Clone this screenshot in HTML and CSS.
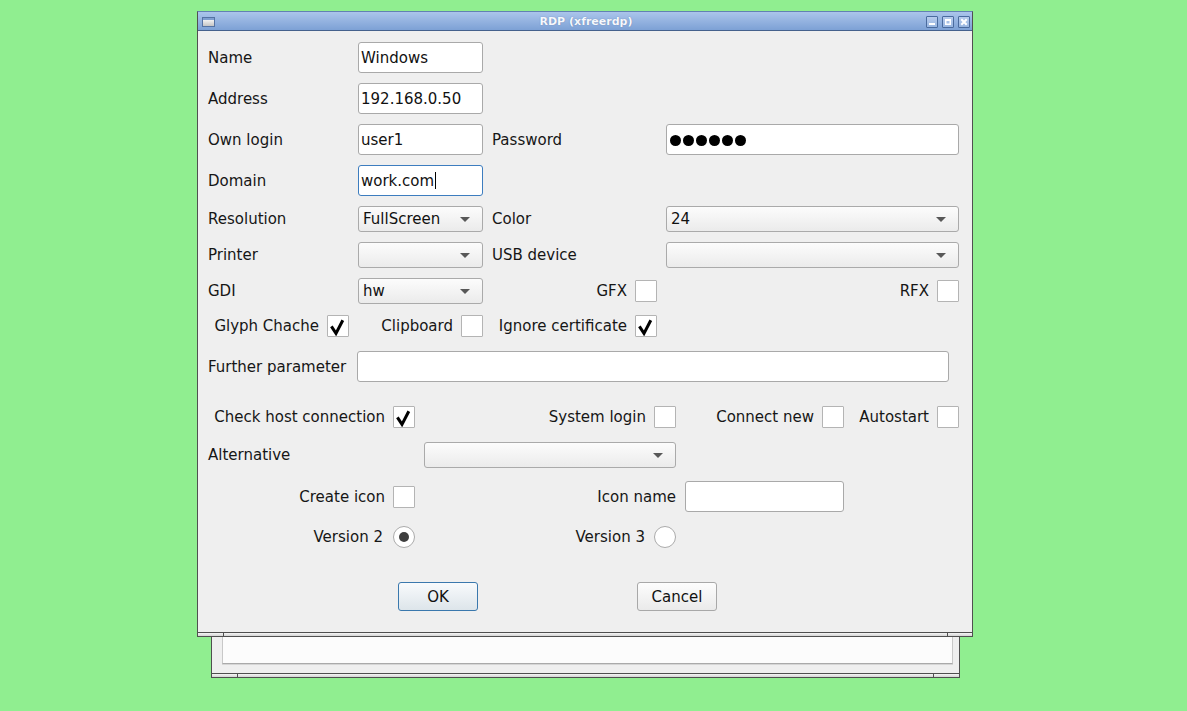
FILE: index.html
```html
<!DOCTYPE html>
<html>
<head>
<meta charset="utf-8">
<title>RDP (xfreerdp)</title>
<link rel="stylesheet" href="styles.css">
</head>
<body>
<div class="win back">
  <div class="back-body"><div class="back-field"></div></div>
  <div class="strip"><span class="seg seg-l"></span><span class="seg seg-m"></span><span class="seg seg-r back-r"></span></div>
</div>

<div class="win front">
  <div class="titlebar">
    <div class="ticon"></div>
    <div class="ttitle">RDP (xfreerdp)</div>
    <div class="tbtns">
      <span class="tb"><svg viewBox="0 0 10 10" width="10" height="10"><rect x="2" y="6" width="6" height="2" fill="#fff"/></svg></span>
      <span class="tb"><svg viewBox="0 0 10 10" width="10" height="10"><path d="M2 2h6v6H2z M3.5 4v2.5h3V4z" fill="#fff" fill-rule="evenodd"/></svg></span>
      <span class="tb"><svg viewBox="0 0 10 10" width="10" height="10"><path d="M2.3 2.3l5.4 5.4M7.7 2.3l-5.4 5.4" stroke="#fff" stroke-width="2"/></svg></span>
    </div>
  </div>

  <div class="form">
    <div class="row h31 first">
      <span class="lbl w150">Name</span>
      <div class="edit w125">Windows</div>
    </div>
    <div class="row h31">
      <span class="lbl w150">Address</span>
      <div class="edit w125">192.168.0.50</div>
    </div>
    <div class="row h31">
      <span class="lbl w150">Own login</span>
      <div class="edit w125">user1</div>
      <span class="lbl w174 ml9">Password</span>
      <div class="edit w293"><span class="dots"><i></i><i></i><i></i><i></i><i></i><i></i></span></div>
    </div>
    <div class="row h31">
      <span class="lbl w150">Domain</span>
      <div class="edit w125 focus">work.com<span class="caret"></span></div>
    </div>
    <div class="row h26">
      <span class="lbl w150">Resolution</span>
      <div class="combo w125"><span>FullScreen</span><span class="arrow"></span></div>
      <span class="lbl w174 ml9">Color</span>
      <div class="combo w293"><span>24</span><span class="arrow"></span></div>
    </div>
    <div class="row h26">
      <span class="lbl w150">Printer</span>
      <div class="combo w125"><span></span><span class="arrow"></span></div>
      <span class="lbl w174 ml9">USB device</span>
      <div class="combo w293"><span></span><span class="arrow"></span></div>
    </div>
    <div class="row h26">
      <span class="lbl w150">GDI</span>
      <div class="combo w125"><span>hw</span><span class="arrow"></span></div>
      <div class="cell w174"><span>GFX</span><span class="cb"></span></div>
      <div class="cell w302"><span>RFX</span><span class="cb"></span></div>
    </div>
    <div class="row h24">
      <div class="cell w141"><span>Glyph Chache</span><span class="cb on"><svg viewBox="0 0 20 20" width="20" height="20"><path d="M3.4 10.4L8 17.4L14.8 4.2" fill="none" stroke="#000" stroke-width="3"/></svg></span></div>
      <div class="cell w134"><span>Clipboard</span><span class="cb"></span></div>
      <div class="cell w174"><span>Ignore certificate</span><span class="cb on"><svg viewBox="0 0 20 20" width="20" height="20"><path d="M3.4 10.4L8 17.4L14.8 4.2" fill="none" stroke="#000" stroke-width="3"/></svg></span></div>
    </div>
    <div class="row h31 r9">
      <span class="lbl w149">Further parameter</span>
      <div class="edit w592"></div>
    </div>
    <div class="row h22 r10">
      <div class="cell w207"><span>Check host connection</span><span class="cb on"><svg viewBox="0 0 20 20" width="20" height="20"><path d="M3.4 10.4L8 17.4L14.8 4.2" fill="none" stroke="#000" stroke-width="3"/></svg></span></div>
      <div class="cell w261"><span>System login</span><span class="cb"></span></div>
      <div class="cell w168"><span>Connect new</span><span class="cb"></span></div>
      <div class="cell w115"><span>Autostart</span><span class="cb"></span></div>
    </div>
    <div class="row h26 r11">
      <span class="lbl w216">Alternative</span>
      <div class="combo w252"><span></span><span class="arrow"></span></div>
    </div>
    <div class="row h31 r12">
      <div class="cell w207"><span>Create icon</span><span class="cb"></span></div>
      <div class="cell w261"><span>Icon name</span></div>
      <div class="edit w159 ml9"></div>
    </div>
    <div class="row h22 r13">
      <div class="cell w207 gap10"><span>Version 2</span><span class="rb on"></span></div>
      <div class="cell w261 gap9"><span>Version 3</span><span class="rb"></span></div>
    </div>
    <div class="row h29 r14">
      <div class="btn def ml190">OK</div>
      <div class="btn ml159">Cancel</div>
    </div>
  </div>

  <div class="strip"><span class="seg seg-l"></span><span class="seg seg-m"></span><span class="seg seg-r"></span></div>
</div>
</body>
</html>
```

FILE: styles.css
```css
* { box-sizing: border-box; }
html, body { margin: 0; padding: 0; }
body {
  width: 1187px;
  height: 711px;
  background: #90ee90;
  position: relative;
  overflow: hidden;
  font-family: "DejaVu Sans", "Liberation Sans", sans-serif;
  font-size: 15px;
  color: #161616;
}

/* windows on the desktop */
.win {
  position: absolute;
  border: 1px solid #505050;
  background: #efefef;
  display: flex;
  flex-direction: column;
}
.back { left: 211px; top: 590px; width: 749px; height: 88px; }
.front { left: 197px; top: 11px; width: 776px; height: 626px; border-top-color: #6281b3; }

.back-body {
  flex: 1;
  display: flex;
  flex-direction: column;
  justify-content: flex-end;
  padding: 0 6px 9px 10px;
}
.back-field {
  height: 60px;
  background: #fcfcfc;
  border: 1px solid #c8c8c8;
  border-bottom-color: #aaaaaa;
  box-shadow: 0 1px 0 #d6d6d6;
}

.strip {
  height: 4px;
  flex: none;
  border-top: 1px solid #4f4f4f;
  display: flex;
  background: linear-gradient(#f6f6f6, #d4d4d4);
}
.seg { display: block; height: 100%; }
.seg-l { width: 26px; border-right: 1px solid #4f4f4f; }
.seg-m { flex: 1; }
.seg-r { width: 25px; border-left: 1px solid #4f4f4f; }
.back-r { width: 26px; }

/* title bar */
.titlebar {
  height: 19px;
  flex: none;
  border-bottom: 1px solid #45618c;
  background: linear-gradient(#abc5eb, #7da1d5);
  display: grid;
  grid-template-columns: 1fr auto 1fr;
  align-items: center;
  padding: 0 2px 0 4px;
}
.ticon {
  width: 13px;
  height: 10px;
  border: 1px solid #5573a3;
  background: linear-gradient(#7f9fd0 0, #7f9fd0 2px, #f2f2f2 2px, #c4c4c4);
  margin-top: 1px;
}
.ttitle {
  font-family: "DejaVu Sans", sans-serif;
  font-weight: bold;
  font-size: 11px;
  color: #f6f8fc;
  text-shadow: 0 0 1px rgba(50, 80, 130, 0.6);
  white-space: nowrap;
}
.tbtns { justify-self: end; display: flex; gap: 4px; margin-top: 1px; }
.tb {
  width: 12px;
  height: 12px;
  border: 1px solid #4a6b9e;
  border-radius: 1px;
  background: linear-gradient(#b7cced, #97b5e0);
  display: block;
}
.tb svg { display: block; }

/* form */
.form {
  flex: 1;
  padding: 11px 0 0 10px;
  display: flex;
  flex-direction: column;
}
.row { display: flex; align-items: center; margin-top: 10px; flex: none; }
.row.first { margin-top: 0; }
.h22 { height: 22px; }
.h24 { height: 24px; }
.h26 { height: 26px; }
.h29 { height: 29px; }
.h31 { height: 31px; }
.r9 { margin-top: 13px; }
.r10 { margin-top: 24px; }
.r11 { margin-top: 14px; }
.r12 { margin-top: 13px; }
.r13 { margin-top: 14px; }
.r14 { margin-top: 34px; }

.lbl { white-space: nowrap; flex: none; }
.w115 { width: 115px; flex: none; }
.w125 { width: 125px; flex: none; }
.w134 { width: 134px; flex: none; }
.w141 { width: 141px; flex: none; }
.w149 { width: 149px; flex: none; }
.w150 { width: 150px; flex: none; }
.w159 { width: 159px; flex: none; }
.w168 { width: 168px; flex: none; }
.w174 { width: 174px; flex: none; }
.w207 { width: 207px; flex: none; }
.w216 { width: 216px; flex: none; }
.w252 { width: 252px; flex: none; }
.w261 { width: 261px; flex: none; }
.w293 { width: 293px; flex: none; }
.w302 { width: 302px; flex: none; }
.w592 { width: 592px; flex: none; }
.ml9 { margin-left: 9px; }
.ml159 { margin-left: 159px; }
.ml190 { margin-left: 190px; }

.cell {
  display: flex;
  align-items: center;
  justify-content: flex-end;
  gap: 8px;
  white-space: nowrap;
}
.gap9 { gap: 9px; }
.gap10 { gap: 10px; }

.edit {
  height: 31px;
  background: #fff;
  border: 1px solid #a9a9a9;
  border-radius: 3px;
  padding: 0 3px 0 2px;
  display: flex;
  align-items: center;
  white-space: nowrap;
  color: #111;
}
.edit.focus { border-color: #3d7dbf; }
.caret { display: block; width: 1px; height: 17px; background: #000; margin-left: 1px; }

.dots { display: flex; gap: 2px; margin-left: 1px; margin-top: 2px; }
.dots i { display: block; width: 11px; height: 11px; border-radius: 50%; background: #000; }

.combo {
  height: 26px;
  border: 1px solid #aaaaaa;
  border-radius: 3px;
  background: linear-gradient(#fcfcfc, #ebebeb);
  display: flex;
  align-items: center;
  justify-content: space-between;
  padding: 0 12px 0 4px;
  white-space: nowrap;
  color: #111;
}
.arrow {
  display: block;
  width: 0;
  height: 0;
  border-left: 5px solid transparent;
  border-right: 5px solid transparent;
  border-top: 5px solid #585858;
}

.cb {
  display: block;
  width: 22px;
  height: 22px;
  flex: none;
  background: #fff;
  border: 1px solid #b4b4b4;
  border-radius: 1px;
}
.cb svg { display: block; }

.rb {
  display: flex;
  align-items: center;
  justify-content: center;
  width: 22px;
  height: 22px;
  flex: none;
  border-radius: 50%;
  background: #fff;
  border: 1px solid #ababab;
}
.rb.on::after {
  content: "";
  display: block;
  width: 10px;
  height: 10px;
  border-radius: 50%;
  background: #3e3e3e;
}

.btn {
  width: 80px;
  height: 29px;
  flex: none;
  border: 1px solid #a8a8a8;
  border-radius: 3px;
  background: linear-gradient(#fdfdfd, #eaeaea);
  display: flex;
  align-items: center;
  justify-content: center;
  color: #111;
}
.btn.def {
  border-color: #3a78ad;
  background: linear-gradient(#f8fafc, #dde5ea);
}
```
